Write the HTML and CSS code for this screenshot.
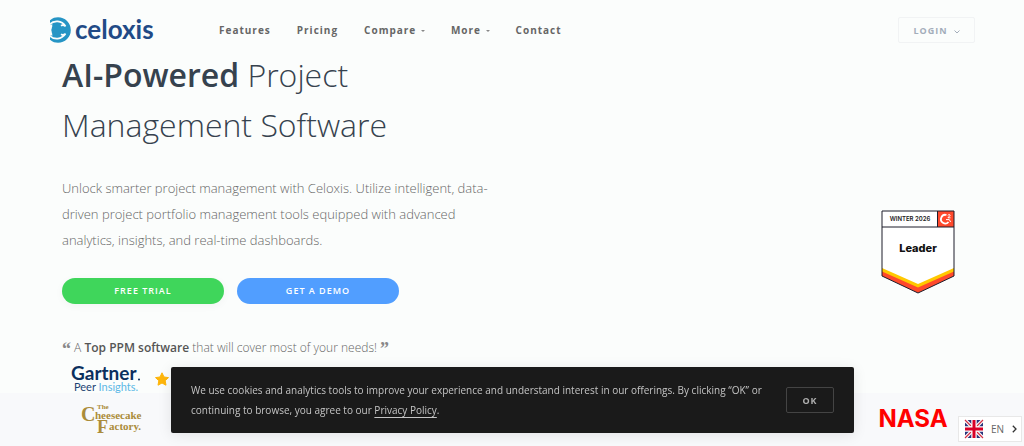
FILE: index.html
```html
<!DOCTYPE html>
<html lang="en">
<head>
<meta charset="utf-8">
<meta name="viewport" content="width=device-width, initial-scale=1">
<title>Celoxis</title>
<link rel="stylesheet" href="styles.css">
</head>
<body>
<header class="header">
  <a class="brand" href="#" aria-label="celoxis">
    <svg class="brand-mark" viewBox="0 0 22 26" aria-hidden="true">
      <path d="M1 3.200C4 .8 6 .2 9 .2A12.800 12.800 0 0 1 9 25.800C6 25.800 4 25.200 1 22.800V18.500L3.600 17V9L1 7.500Z" fill="#2695c5"/>
      <circle cx="9" cy="13" r="6.800" fill="#2695c5"/>
      <path d="M.8 7.200C5 3.200 12.500 3.200 16.500 9.200C14.500 7.900 13 8 12 8.700M.8 18.800C5 22.800 12.500 22.800 16.500 16.800C14.500 18.100 13 18 12 17.300" fill="none" stroke="#fbfdfc" stroke-width="1.700"/>
      <path d="M0 7.500L3.600 7.500C1.600 11 1.600 15 3.600 18.500H0Z" fill="#fbfdfc"/>
    </svg>
    <span class="brand-name">celoxis</span>
  </a>
  <nav class="nav">
    <a href="#">Features</a>
    <a href="#">Pricing</a>
    <a href="#">Compare <i class="caret"></i></a>
    <a href="#">More <i class="caret"></i></a>
    <a href="#">Contact</a>
  </nav>
  <button class="login" type="button">LOGIN
    <svg class="login-arrow" viewBox="0 0 6 4" aria-hidden="true"><path d="M.5.5L3 3L5.500.5" fill="none" stroke="currentColor"/></svg>
  </button>
</header>
<main>
  <section class="hero">
    <div class="hero-copy">
      <h1 class="title"><strong>AI-Powered</strong> Project<br>Management Software</h1>
      <p class="lead">Unlock smarter project management with Celoxis. Utilize intelligent, data-driven project portfolio management tools equipped with advanced analytics, insights, and real-time dashboards.</p>
      <div class="actions">
        <a class="pill pill-green" href="#">FREE TRIAL</a>
        <a class="pill pill-blue" href="#">GET A DEMO</a>
      </div>
      <p class="quote"><span class="mark">“</span> A <strong>Top PPM software</strong> that will cover most of your needs! <span class="mark">”</span></p>
      <div class="rating">
        <svg class="gartner" viewBox="0 0 70 28" role="img" aria-label="Gartner Peer Insights">
          <text class="gartner-name" x="0" y="15">Gartner</text>
          <circle cx="68" cy="14.500" r="1" fill="#0b2f5e"/>
          <text class="gartner-sub" x="3" y="26"><tspan fill="#1d4474">Peer</tspan> <tspan fill="#5cb8e6">Insights.</tspan></text>
        </svg>
        <svg class="star" viewBox="0 0 14 14" aria-hidden="true"><path d="M7 .8L9 5l4.500.600L10.200 8.700L11 13.200L7 11L3 13.200L3.800 8.700L.5 5.600L5 5Z" fill="#ffb60a" stroke="#ffb60a" stroke-linejoin="round"/></svg>
      </div>
    </div>
    <svg class="badge" viewBox="0 0 74 84" role="img" aria-label="Winter 2026 Leader">
      <path d="M1 1H73V66L37 83L1 66Z" fill="#fff"/>
      <path d="M1 58L37 74L73 58V63L37 79L1 63Z" fill="#ffc800"/>
      <path d="M1 61.500L37 77.500L73 61.500V66L37 83L1 66Z" fill="#ff492c"/>
      <path d="M56.500 1H73V17H56.500Z" fill="#ff492c"/>
      <path d="M1 17H73M56.500 1V17M1 1H73V66L37 83L1 66Z" fill="none" stroke="#1c1c2b" stroke-width="1"/>
      <path d="M65.500 5A4.300 4.300 0 1 0 67.500 12" fill="none" stroke="#fff" stroke-width="1.800"/>
      <path d="M67 5.500C67 4.200 69.200 4.200 69.100 5.500C69 6.500 67 6.600 67 7.800H69.500M65 9.600H68.300L69.600 12" fill="none" stroke="#fff" stroke-width="1"/>
      <text class="badge-season" x="29" y="11" text-anchor="middle">WINTER 2026</text>
      <text class="badge-rank" x="37" y="42" text-anchor="middle">Leader</text>
    </svg>
  </section>
  <section class="clients">
    <svg class="cheesecake" viewBox="0 0 64 32" role="img" aria-label="The Cheesecake Factory">
      <text class="cheese-the" x="16" y="6">The</text>
      <text class="cheese-c" x="0" y="18">C</text>
      <text class="cheese-word" x="14" y="16">heesecake</text>
      <text class="cheese-f" x="16" y="30">F</text>
      <text class="cheese-word" x="28" y="27">actory.</text>
    </svg>
    <svg class="nasa" viewBox="0 0 68 22" role="img" aria-label="NASA"><text x="34" y="19" text-anchor="middle">NASA</text></svg>
  </section>
</main>
<aside class="cookies" aria-label="Cookies">
  <p class="cookies-text">We use cookies and analytics tools to improve your experience and understand interest in our offerings. By clicking “OK” or continuing to browse, you agree to our <a href="#">Privacy Policy</a>.</p>
  <button class="cookies-ok" type="button">OK</button>
</aside>
<button class="language" type="button">
  <svg class="flag" viewBox="0 0 18 18" aria-hidden="true">
    <path d="M0 0H18V18H0Z" fill="#29337a"/>
    <path d="M0 0L18 18M18 0L0 18" stroke="#fff" stroke-width="3.600"/>
    <path d="M0 0L18 18M18 0L0 18" stroke="#d32f45" stroke-width="1.200"/>
    <path d="M9 0V18M0 9H18" stroke="#fff" stroke-width="5.400"/>
    <path d="M9 0V18M0 9H18" stroke="#d80027" stroke-width="3"/>
  </svg>
  <span>EN</span>
  <svg class="chevron" viewBox="0 0 5 8" aria-hidden="true"><path d="M.8.8L4 4L.8 7.200" fill="none" stroke="#333" stroke-width="1.300"/></svg>
</button>
</body>
</html>
```
FILE: styles.css
```css
* { box-sizing: border-box; }
body {
  margin: 0;
  min-height: 100vh;
  background: #fbfdfc;
  color: #666;
  font-family: "Open Sans", "Noto Sans", sans-serif;
  overflow: hidden;
}
a { color: inherit; text-decoration: none; }
h1, p { margin: 0; }
button { font-family: inherit; }
svg { overflow: visible; }

.header {
  display: flex;
  align-items: center;
  padding: 17px 49px 7px;
}
.brand { display: flex; align-items: center; gap: 4px; height: 26px; width: 170px; }
.brand-mark { width: 22px; height: 26px; }
.brand-name {
  color: #214a86;
  font: 700 26px/26px Lato, sans-serif;
  padding-bottom: 3px;
}
.nav {
  display: flex;
  gap: 26px;
  flex: 1;
  color: #666;
  font-size: 10px;
  font-weight: 700;
  line-height: 26px;
  letter-spacing: 1px;
}
.caret {
  display: inline-block;
  margin-left: 1px;
  vertical-align: middle;
  border: 2px solid transparent;
  border-top-color: #888;
  border-bottom: 0;
}
.login {
  display: flex;
  align-items: center;
  justify-content: center;
  gap: 6px;
  width: 77px;
  height: 26px;
  padding: 0;
  border: 1px solid #f1f3f4;
  border-radius: 2px;
  background: transparent;
  color: #a3adba;
  font-size: 9px;
  font-weight: 700;
  letter-spacing: 1px;
}
.login-arrow { width: 6px; height: 4px; margin-top: 4px; }

.hero {
  display: flex;
  justify-content: space-between;
  align-items: flex-start;
  padding: 0 69px 0 62px;
}
.hero-copy { max-width: 430px; }
.title {
  color: #36424e;
  font-size: 32px;
  font-weight: 300;
  line-height: 50px;
}
.title strong { font-weight: 600; }
.lead {
  margin-top: 25px;
  font-size: 13px;
  font-weight: 300;
  line-height: 26px;
}
.actions { display: flex; gap: 13px; margin-top: 25px; }
.pill {
  width: 162px;
  border-radius: 13px;
  color: #fff;
  font-size: 9px;
  font-weight: 600;
  letter-spacing: 1px;
  line-height: 26px;
  text-align: center;
}
.pill-green { background: #3fd65b; box-shadow: 0 2px 8px #0000000a; }
.pill-blue { background: #519eff; }
.quote {
  margin-top: 31px;
  font-size: 12px;
  font-weight: 300;
  line-height: 26px;
  white-space: nowrap;
}
.quote strong { color: #555; font-weight: 600; }
.mark { color: #888; font: 700 18px/12px "Liberation Serif", serif; vertical-align: -3px; }
.rating { display: flex; align-items: center; gap: 14px; padding: 4px 0 0 9px; }
.gartner { width: 70px; height: 28px; }
.gartner-name { fill: #0b2f5e; font: 700 19px Lato, sans-serif; }
.gartner-sub { font: 400 11px Lato, sans-serif; }
.star { width: 14px; height: 14px; }
.badge { width: 74px; height: 84px; margin-top: 160px; }
.badge-season { fill: #222; font: 600 6px Inter, sans-serif; }
.badge-rank { fill: #111; font: 800 11px Inter, sans-serif; }

.clients {
  display: flex;
  justify-content: space-between;
  align-items: center;
  padding: 10px 77px 12px 81px;
  background: #f8f9fb;
}
.cheesecake { width: 64px; height: 32px; fill: #ab8c3a; }
.cheese-the { font: 700 7px "Liberation Serif", serif; }
.cheese-c { font: 700 20px "Liberation Serif", serif; }
.cheese-f { font: 700 18px "Liberation Serif", serif; }
.cheese-word { font: 700 11px "Liberation Serif", serif; }
.nasa { width: 68px; height: 22px; fill: #f00; font: 700 24px Inter, sans-serif; }

.cookies {
  position: fixed;
  left: 171px;
  right: 170px;
  bottom: 13px;
  display: flex;
  align-items: center;
  justify-content: space-between;
  padding: 13px 20px;
  border-radius: 2px;
  background: #1a1a1a;
  box-shadow: 0 2px 14px #00000018;
  color: #c4c4c4;
}
.cookies-text { max-width: 585px; font-size: 10px; line-height: 20px; }
.cookies-text a { text-decoration: underline; text-underline-offset: 3px; }
.cookies-ok {
  width: 48px;
  height: 26px;
  border: 1px solid #444;
  border-radius: 2px;
  background: transparent;
  color: #b0b0b0;
  font-size: 9px;
  font-weight: 700;
  letter-spacing: 1px;
}
.language {
  position: fixed;
  right: 2px;
  bottom: 4px;
  display: flex;
  align-items: center;
  gap: 8px;
  width: 64px;
  height: 26px;
  padding: 0 6px;
  border: 1px solid #e8e8e8;
  background: #fff;
  color: #666;
  font-size: 10px;
}
.flag { width: 18px; height: 18px; }
.chevron { width: 5px; height: 8px; }
```
